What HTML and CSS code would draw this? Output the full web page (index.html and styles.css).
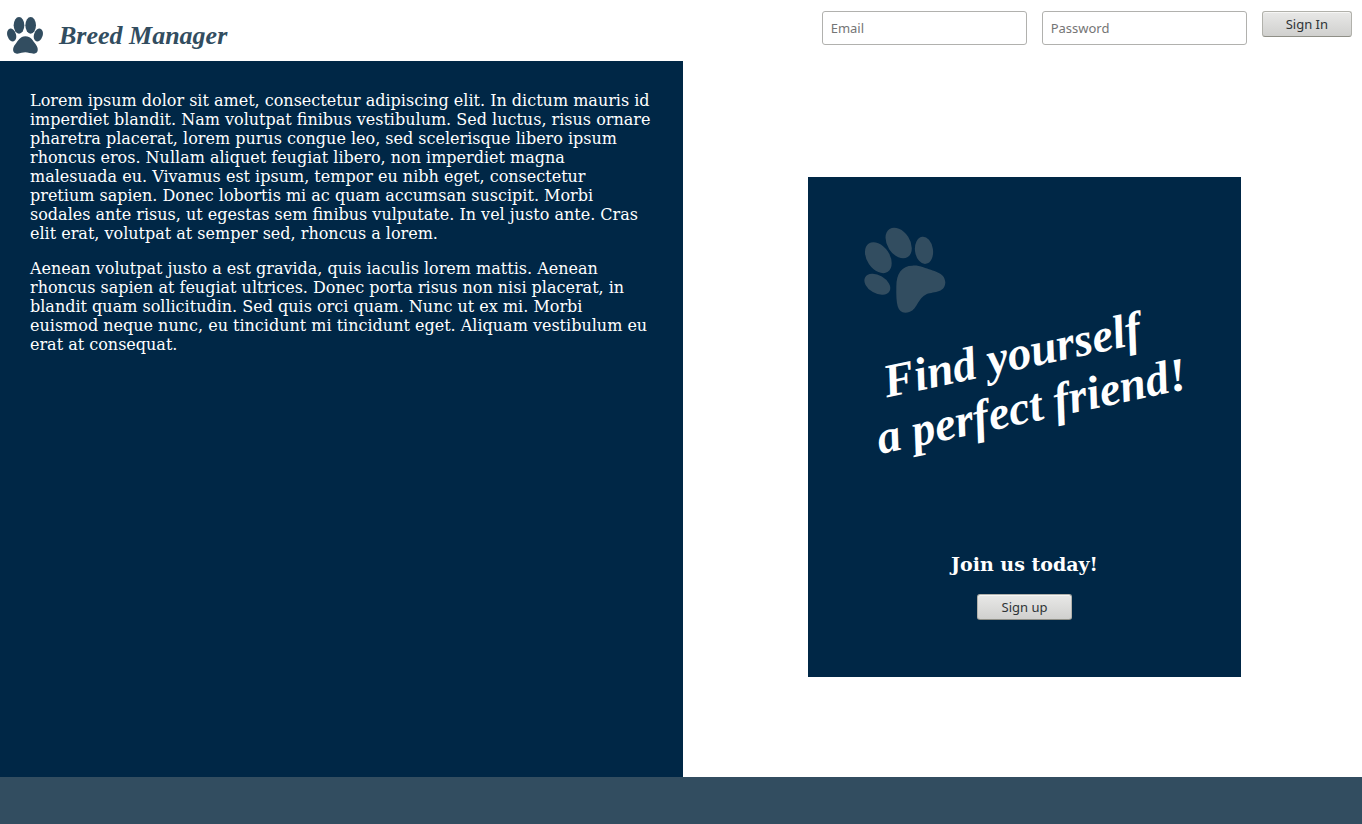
FILE: index.html
```html
<!DOCTYPE html>
<html lang="en">
<head>
<meta charset="utf-8">
<title>Breed Manager</title>
<link rel="stylesheet" href="styles.css">
</head>
<body>
<header class="topbar">
  <a class="brand" href="#">
    <svg class="brand-paw" viewBox="21 51 108 111" aria-hidden="true">
      <ellipse cx="57" cy="76" rx="16" ry="25"/>
      <ellipse cx="92" cy="76" rx="16" ry="25"/>
      <ellipse cx="35" cy="105" rx="13" ry="20" transform="rotate(-18 35 105)"/>
      <ellipse cx="115" cy="105" rx="13" ry="20" transform="rotate(18 115 105)"/>
      <path d="M76 109C60 109 54 123 46 133C35 146 38 162 52 161C62 160 68 157 76 157C84 157 92 161 102 161C115 161 117 146 107 133C98 122 93 109 76 109Z"/>
    </svg>
    <span class="brand-name">Breed Manager</span>
  </a>
  <form class="signin">
    <input class="field" type="email" placeholder="Email" aria-label="Email">
    <input class="field" type="password" placeholder="Password" aria-label="Password">
    <button class="button button-compact" type="button">Sign In</button>
  </form>
</header>
<main class="main">
  <section class="intro">
    <p>Lorem ipsum dolor sit amet, consectetur adipiscing elit. In dictum mauris id imperdiet blandit. Nam volutpat finibus vestibulum. Sed luctus, risus ornare pharetra placerat, lorem purus congue leo, sed scelerisque libero ipsum rhoncus eros. Nullam aliquet feugiat libero, non imperdiet magna malesuada eu. Vivamus est ipsum, tempor eu nibh eget, consectetur pretium sapien. Donec lobortis mi ac quam accumsan suscipit. Morbi sodales ante risus, ut egestas sem finibus vulputate. In vel justo ante. Cras elit erat, volutpat at semper sed, rhoncus a lorem.</p>
    <p>Aenean volutpat justo a est gravida, quis iaculis lorem mattis. Aenean rhoncus sapien at feugiat ultrices. Donec porta risus non nisi placerat, in blandit quam sollicitudin. Sed quis orci quam. Nunc ut ex mi. Morbi euismod neque nunc, eu tincidunt mi tincidunt eget. Aliquam vestibulum eu erat at consequat.</p>
  </section>
  <section class="join">
    <div class="card">
      <svg class="card-art" viewBox="0 0 433 360" role="img" aria-label="Find yourself a perfect friend!">
        <g class="card-paw" transform="translate(32 33) scale(.3333)">
          <ellipse cx="176" cy="99" rx="34" ry="50" transform="rotate(-33 176 99)"/>
          <ellipse cx="115" cy="143" rx="34" ry="51" transform="rotate(-34 115 143)"/>
          <ellipse cx="252" cy="121" rx="27" ry="41" transform="rotate(-8 252 121)"/>
          <ellipse cx="112" cy="223" rx="42" ry="27" transform="rotate(30 112 223)"/>
          <path d="M217 167C186 167 169 190 169 230C168 282 172 308 196 308C233 306 228 270 257 254C276 244 315 252 316 217C314 186 280 184 250 172C238 168 228 166 217 167Z"/>
        </g>
        <g class="slogan" transform="rotate(-12 77 275)">
          <text x="90" y="222">Find yourself</text>
          <text x="72" y="276">a perfect friend!</text>
        </g>
      </svg>
      <h3 class="card-title">Join us today!</h3>
      <button class="button" type="button">Sign up</button>
    </div>
  </section>
</main>
<footer class="footer"></footer>
</body>
</html>
```
FILE: styles.css
```css
* {
  box-sizing: border-box;
}

body {
  display: flex;
  flex-direction: column;
  min-height: 100vh;
  margin: 0;
  background: #fff;
  color: #fff;
  font: 16px/19px "DejaVu Serif", serif;
}

.topbar {
  display: flex;
  justify-content: space-between;
  align-items: flex-start;
  padding: 11px 10px 7px 7px;
}

.brand {
  display: flex;
  align-items: center;
  gap: 16px;
  padding-top: 6px;
  color: #324d60;
  text-decoration: none;
}

.brand-paw {
  width: 36px;
  height: 37px;
  fill: currentColor;
}

.brand-name {
  font: italic bold 26px/32px "Liberation Serif", serif;
}

.signin {
  display: flex;
  align-items: flex-start;
  gap: 15px;
}

.field {
  width: 205px;
  height: 34px;
  padding: 0 8px;
  border: 1px solid #b1b1ae;
  border-radius: 3px;
  background: #fff;
  font: 13px "Noto Sans", sans-serif;
}

.field::placeholder {
  color: #757575;
}

.button {
  height: 26px;
  padding: 0 24px;
  border: 1px solid #b1b1ab;
  border-bottom-color: #8f8f87;
  border-radius: 3px;
  background: linear-gradient(#e8e8e7, #d0d0ce);
  box-shadow: inset 0 1px #f6f6f5;
  color: #2e3436;
  font: 13px "Noto Sans", sans-serif;
}

.button-compact {
  padding: 0 23px;
}

.main {
  display: flex;
  flex: 1;
}

.intro {
  width: 683px;
  flex: 0 1 auto;
  padding: 30px;
  background: #002746;
}

.intro p {
  margin: 0 0 16px;
}

.join {
  display: flex;
  flex: 1;
  justify-content: center;
  align-items: center;
  padding: 16px 0 0 4px;
}

.card {
  display: flex;
  flex-direction: column;
  align-items: center;
  width: 433px;
  padding-bottom: 57px;
  background: #002746;
}

.card-art {
  width: 100%;
}

.card-paw {
  fill: #324d60;
}

.slogan {
  fill: #fff;
  font: italic bold 47px "Liberation Serif", serif;
}

.card-title {
  margin: 18px 0 20px;
  font-size: 19px;
  line-height: 19px;
}

.footer {
  height: 47px;
  background: #324d60;
}
```
